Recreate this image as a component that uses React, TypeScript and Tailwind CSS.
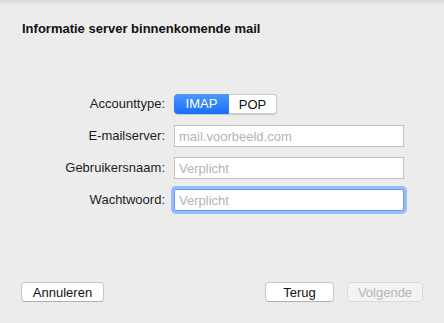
import { useState } from 'react';

const font = { fontFamily: '"Liberation Sans", Arial, sans-serif' };

const Row = ({ label, children }: { label: string; children: React.ReactNode }) => (
  <div className="flex items-center">
    <div className="w-[166px] text-right text-[13px] text-[#1c1c1c] pr-[1px]">{label}</div>
    <div className="ml-[8px]">{children}</div>
  </div>
);

const Field = ({ placeholder, focused }: { placeholder: string; focused?: boolean }) => (
  <div
    className={`w-[230px] h-[22px] bg-white flex items-center ${
      focused
        ? 'border border-[#6a9ee8] rounded-[2px] shadow-[0_0_0_3px_#94bdf5]'
        : 'border border-[#c4c4c4]'
    }`}
  >
    <input
      placeholder={placeholder}
      className="w-full h-full px-[4px] text-[13px] bg-transparent outline-none placeholder:text-[#b3b3b3]"
      style={font}
    />
  </div>
);

export default function App() {
  const [type, setType] = useState<'imap' | 'pop'>('imap');

  return (
    <div className="relative w-[444px] h-[323px] bg-[#ececec] flex flex-col overflow-hidden" style={font}>
      <div className="absolute inset-x-0 top-0 h-[5px] bg-gradient-to-b from-[#d6d6d6] to-[#ececec]" />

      <h1 className="pt-[21px] pl-[22px] text-[13px] leading-[16px] font-bold text-[#111]">
        Informatie server binnenkomende mail
      </h1>

      <div className="mt-[57px] flex flex-col">
        <Row label="Accounttype:">
          <div className="flex h-[20px] rounded-[4px] shadow-[0_1px_1px_rgba(0,0,0,0.15)]">
            <button
              onClick={() => setType('imap')}
              className={`w-[55px] h-full rounded-l-[4px] text-[13px] ${
                type === 'imap'
                  ? 'bg-gradient-to-b from-[#4a98fb] to-[#1a6ef6] text-white'
                  : 'bg-white text-[#111] border border-r-0 border-[#cdcdcd]'
              }`}
            >
              IMAP
            </button>
            <button
              onClick={() => setType('pop')}
              className={`w-[48px] h-full rounded-r-[4px] text-[13px] ${
                type === 'pop'
                  ? 'bg-gradient-to-b from-[#4a98fb] to-[#1a6ef6] text-white'
                  : 'bg-white text-[#111] border border-l-0 border-[#cdcdcd]'
              }`}
            >
              POP
            </button>
          </div>
        </Row>
        <div className="mt-[11px]">
          <Row label="E-mailserver:">
            <Field placeholder="mail.voorbeeld.com" />
          </Row>
        </div>
        <div className="mt-[10px]">
          <Row label="Gebruikersnaam:">
            <Field placeholder="Verplicht" />
          </Row>
        </div>
        <div className="mt-[10px]">
          <Row label="Wachtwoord:">
            <Field placeholder="Verplicht" focused />
          </Row>
        </div>
      </div>

      <div className="mt-auto mb-[21px] flex items-center px-[21px]">
        <button className="w-[83px] h-[20px] bg-white rounded-[4px] border border-[#c8c8c8] border-b-[#b0b0b0] text-[13px] text-[#111]">
          Annuleren
        </button>
        <div className="flex-1" />
        <button className="w-[69px] h-[20px] bg-white rounded-[4px] border border-[#c8c8c8] border-b-[#b0b0b0] text-[13px] text-[#111]">
          Terug
        </button>
        <button
          disabled
          className="ml-[13px] w-[76px] h-[20px] bg-[#f3f3f3] rounded-[4px] border border-[#dadada] text-[13px] text-[#b5b5b5]"
        >
          Volgende
        </button>
      </div>
    </div>
  );
}
